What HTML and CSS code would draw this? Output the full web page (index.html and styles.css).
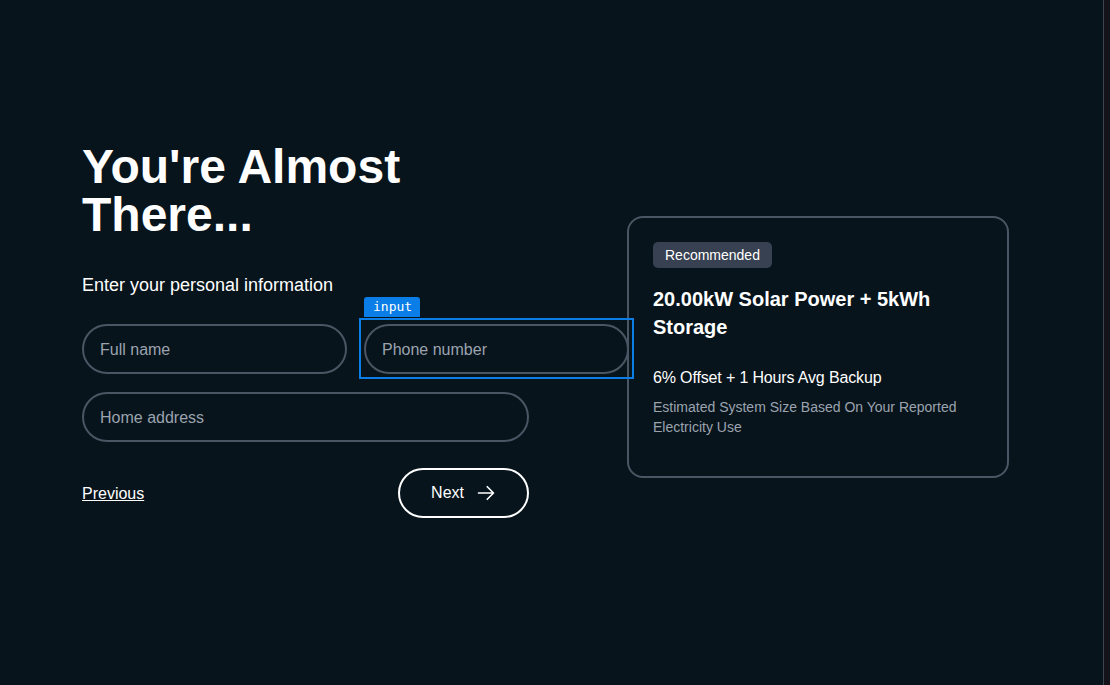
FILE: index.html
```html
<!DOCTYPE html>
<html lang="en">
<head>
<meta charset="utf-8">
<title>You're Almost There</title>
<link rel="stylesheet" href="styles.css">
</head>
<body>
<main class="page">
  <section class="form-col">
    <h1 class="title">You're Almost There...</h1>
    <p class="subtitle">Enter your personal information</p>
    <div class="fields">
      <div class="field"><input class="input" type="text" placeholder="Full name"></div>
      <div class="field inspected">
        <input class="input" type="tel" placeholder="Phone number">
        <span class="inspect-box"></span>
        <span class="inspect-tag">input</span>
      </div>
      <div class="field wide"><input class="input" type="text" placeholder="Home address"></div>
    </div>
    <div class="actions">
      <a class="prev" href="#">Previous</a>
      <button class="next" type="button">Next
        <svg class="arrow" width="20" height="20" viewBox="0 0 24 24" fill="none" stroke="currentColor" stroke-width="2" stroke-linecap="round" stroke-linejoin="round"><path d="M13.5 4.5 21 12l-7.5 7.5M21 12H3"/></svg>
      </button>
    </div>
  </section>
  <aside class="card">
    <span class="badge">Recommended</span>
    <h2 class="card-title">20.00kW Solar Power + 5kWh Storage</h2>
    <p class="card-offset">6% Offset + 1 Hours Avg Backup</p>
    <p class="card-desc">Estimated System Size Based On Your Reported Electricity Use</p>
  </aside>
</main>
<div class="scrollbar"></div>
</body>
</html>
```
FILE: styles.css
```css
* { box-sizing: border-box; }
html, body { height: 100%; }
body {
  margin: 0;
  background: #07141c;
  color: #ffffff;
  font-family: "Liberation Sans", Arial, sans-serif;
  display: flex;
  overflow: hidden;
}
.page {
  flex: 1;
  display: flex;
  align-items: flex-start;
  padding: 143px 0 0 82px;
}
.form-col {
  width: 545px;
  display: flex;
  flex-direction: column;
}
.title {
  margin: 0;
  width: 447px;
  font-size: 48px;
  line-height: 48px;
  font-weight: 700;
}
.subtitle {
  margin: 32px 0 0;
  font-size: 18px;
  line-height: 28px;
}
.fields {
  margin-top: 25px;
  display: grid;
  grid-template-columns: 265px 265px;
  column-gap: 17px;
  row-gap: 18px;
}
.field { position: relative; }
.field.wide { grid-column: 1 / -1; width: 447px; }
.input {
  display: block;
  width: 100%;
  height: 50px;
  border: 2px solid #4b5563;
  border-radius: 999px;
  background: transparent;
  color: #ffffff;
  padding: 1px 16px 0;
  font-family: "Liberation Sans", Arial, sans-serif;
  font-size: 16px;
  outline: none;
}
.input::placeholder { color: #9ca3af; }
.inspect-box {
  position: absolute;
  left: -5px; right: -5px; top: -6px; bottom: -5px;
  border: 2px solid #0a7de6;
  pointer-events: none;
}
.inspect-tag {
  position: absolute;
  left: 0; top: -27px;
  height: 20px;
  padding: 0 8px 0 9px;
  background: #0a7de6;
  color: #ffffff;
  border-radius: 3px 3px 0 0;
  font-family: "DejaVu Sans Mono", "Liberation Mono", monospace;
  font-size: 13px;
  line-height: 20px;
}
.actions {
  margin-top: 26px;
  width: 447px;
  display: flex;
  align-items: center;
  justify-content: space-between;
}
.prev {
  color: #ffffff;
  font-size: 16px;
  line-height: 20px;
  padding-top: 1px;
  text-decoration: underline;
}
.next {
  display: flex;
  align-items: center;
  gap: 12px;
  height: 50px;
  padding: 0 31px 0 31px;
  border: 2px solid #ffffff;
  border-radius: 999px;
  background: transparent;
  color: #ffffff;
  font-family: "Liberation Sans", Arial, sans-serif;
  font-size: 16px;
}
.arrow { display: block; }
.card {
  margin-top: 73px;
  width: 382px;
  border: 2px solid #4b5563;
  border-radius: 16px;
  padding: 24px 24px 39px;
  font-family: "Liberation Sans", Arial, sans-serif;
}
.badge {
  display: inline-block;
  height: 26px;
  padding: 0 12px;
  background: #374151;
  border-radius: 5px;
  font-size: 14px;
  line-height: 26px;
}
.card-title {
  margin: 17px 0 0;
  font-size: 20px;
  line-height: 28px;
  font-weight: 700;
}
.card-offset {
  margin: 25px 0 0;
  font-size: 16px;
  line-height: 24px;
  letter-spacing: -0.15px;
}
.card-desc {
  margin: 7px 0 0;
  font-size: 14px;
  line-height: 20px;
  color: #9ca3af;
}
.scrollbar {
  width: 7px;
  flex: none;
  background: #14131c;
  border-left: 1px solid #3d4350;
}
```
